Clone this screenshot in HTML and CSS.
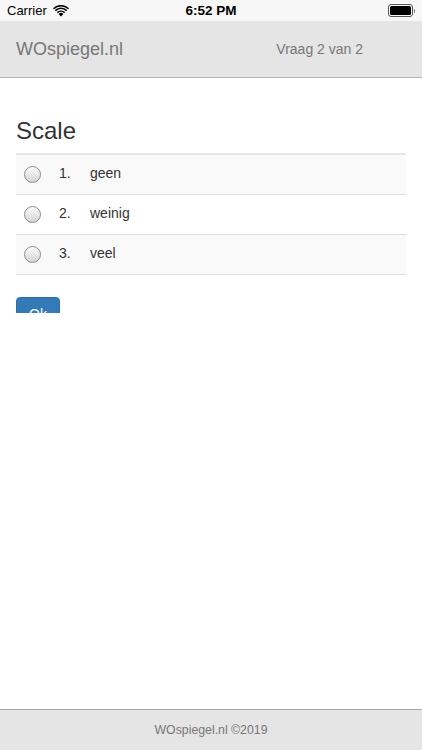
FILE: index.html
```html
<!DOCTYPE html>
<html lang="nl">
<head>
<meta charset="utf-8">
<title>WOspiegel.nl</title>
<link rel="stylesheet" href="styles.css">
</head>
<body>
<div class="page">
  <div class="statusbar">
    <div class="sb-left">
      <span class="carrier">Carrier</span>
      <svg class="wifi" width="16" height="12" viewBox="0 0 16 12">
        <path d="M8 11.5 L5.6 8.9 A3.4 3.4 0 0 1 10.4 8.9 Z" fill="#000"/>
        <path d="M3.8 7.1 A6 6 0 0 1 12.2 7.1 L11.1 8.2 A4.5 4.5 0 0 0 4.9 8.2 Z" fill="#000"/>
        <path d="M1.8 5.1 A8.8 8.8 0 0 1 14.2 5.1 L13.1 6.2 A7.3 7.3 0 0 0 2.9 6.2 Z" fill="#000"/>
        <path d="M0 3.2 A11.4 11.4 0 0 1 16 3.2 L15 4.3 A10 10 0 0 0 1 4.3 Z" fill="#000"/>
      </svg>
    </div>
    <div class="sb-time">6:52 PM</div>
    <div class="sb-right">
      <span class="battery"><span class="battery-fill"></span></span><span class="battery-nub"></span>
    </div>
  </div>
  <nav class="navbar">
    <span class="brand">WOspiegel.nl</span>
    <span class="progress">Vraag 2 van 2</span>
  </nav>
  <main class="main">
    <div class="content">
      <h3 class="title">Scale</h3>
      <div class="options">
        <label class="option striped"><span class="radio"></span><span class="num">1.</span><span class="label">geen</span></label>
        <label class="option"><span class="radio"></span><span class="num">2.</span><span class="label">weinig</span></label>
        <label class="option striped"><span class="radio"></span><span class="num">3.</span><span class="label">veel</span></label>
      </div>
      <button class="btn">Ok</button>
    </div>
  </main>
  <footer class="footer">WOspiegel.nl ©2019</footer>
</div>
</body>
</html>
```
FILE: styles.css
```css
html, body {
  margin: 0;
  padding: 0;
  background: #fff;
}
body {
  font-family: "Liberation Sans", Arial, sans-serif;
  color: #333;
}
.page {
  width: 422px;
  height: 750px;
  display: flex;
  flex-direction: column;
  overflow: hidden;
}
.statusbar {
  height: 21px;
  flex: 0 0 21px;
  background: #f7f7f7;
  display: flex;
  align-items: center;
  justify-content: space-between;
  padding: 0 7px;
  box-sizing: border-box;
  color: #000;
  font-size: 13px;
  position: relative;
}
.sb-left {
  display: flex;
  align-items: center;
  gap: 6px;
}
.wifi {
  display: block;
}
.sb-time {
  position: absolute;
  left: 0;
  right: 0;
  text-align: center;
  font-weight: bold;
  font-size: 13.5px;
  pointer-events: none;
}
.sb-right {
  display: flex;
  align-items: center;
}
.battery {
  width: 21px;
  height: 9px;
  border: 1px solid #555;
  border-radius: 3px;
  padding: 1px;
  display: flex;
}
.battery-fill {
  flex: 1;
  background: #000;
  border-radius: 1.5px;
}
.battery-nub {
  width: 1.5px;
  height: 4px;
  background: #777;
  margin-left: 1px;
  border-radius: 0 1px 1px 0;
}
.navbar {
  height: 56px;
  flex: 0 0 56px;
  background: #e5e5e5;
  border-bottom: 1px solid #b3b3b3;
  display: flex;
  align-items: center;
  padding: 0 59px 0 16px;
  box-sizing: content-box;
  justify-content: space-between;
  color: #777;
}
.brand {
  font-size: 18px;
}
.progress {
  font-size: 14px;
}
.main {
  flex: 1;
  padding: 0 16px;
}
.content {
  height: 235px;
  overflow: hidden;
  padding-top: 40px;
  box-sizing: border-box;
}
.title {
  margin: 0 0 9px;
  font-size: 24px;
  font-weight: normal;
  line-height: 1.1;
  color: #333;
}
.options {
  border-top: 2px solid #e6e6e6;
  border-bottom: 1px solid #ddd;
  margin-bottom: 22px;
}
.option {
  display: flex;
  align-items: center;
  height: 39px;
  font-size: 14px;
  color: #333;
  padding-left: 8px;
}
.option + .option {
  border-top: 1px solid #ddd;
}
.option.striped {
  background: #f9f9f9;
}
.radio {
  width: 15px;
  height: 15px;
  border-radius: 50%;
  border: 1px solid #8c8c8c;
  background: linear-gradient(#fdfdfd, #d4d4d4);
  box-sizing: content-box;
  flex: 0 0 auto;
}
.num, .label {
  padding-bottom: 4px;
}
.num {
  margin-left: 18px;
  width: 31px;
}
.btn {
  display: block;
  width: 44px;
  height: 34px;
  background: #337ab7;
  border: 1px solid #2e6da4;
  border-radius: 4px;
  color: #fff;
  font-family: "Liberation Sans", Arial, sans-serif;
  font-size: 14px;
  padding: 0;
}
.footer {
  height: 40px;
  flex: 0 0 40px;
  background: #e5e5e5;
  border-top: 1px solid #a9a9a9;
  display: flex;
  align-items: center;
  justify-content: center;
  font-size: 12.3px;
  color: #777;
}
```
